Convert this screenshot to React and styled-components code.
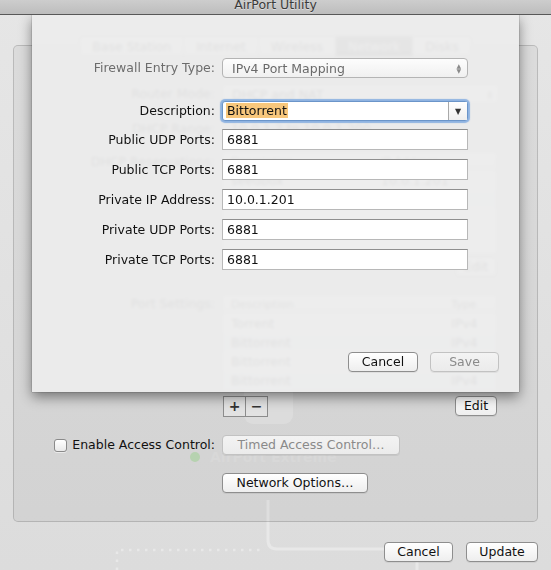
import React from 'react';
import styled, { createGlobalStyle } from 'styled-components';

const GlobalStyle = createGlobalStyle`
  html, body {
    margin: 0;
    padding: 0;
  }
  body {
    width: 551px;
    height: 570px;
    overflow: hidden;
    background: #dedede;
    font-family: "DejaVu Sans", Verdana, sans-serif;
    font-size: 12.5px;
    color: #111;
  }
`;

const Window = styled.div`
  position: relative;
  isolation: isolate;
  width: 551px;
  height: 570px;
  overflow: hidden;
  background: linear-gradient(#e6e6e6, #dcdcdc);
`;

const TitleBar = styled.div`
  position: relative;
  z-index: 3;
  height: 14px;
  display: flex;
  justify-content: center;
  overflow: hidden;
  border-bottom: 1px solid #585858;
  background: linear-gradient(#cdcdcd, #bdbdbd);
`;

const Title = styled.span`
  line-height: 10px;
  color: #3a3a3a;
  text-shadow: 0 1px 0 rgba(255, 255, 255, 0.45);
`;

const Backdrop = styled.svg`
  position: absolute;
  left: 0;
  top: 0;
  z-index: -1;
`;

const Body = styled.div`
  padding: 30px 13px 0;
`;

const Panel = styled.div`
  box-sizing: border-box;
  height: 477px;
  display: flex;
  flex-direction: column;
  padding-right: 40px;
  border: 1px solid rgba(0, 0, 0, 0.15);
  border-radius: 5px;
  background: rgba(0, 0, 0, 0.045);
`;

const Tabs = styled.div`
  align-self: center;
  margin: -10px 0 0 40px;
  display: flex;
  height: 19px;
  border: 1px solid #9c9c9c;
  border-radius: 4px;
  overflow: hidden;
  background: linear-gradient(#ffffff, #ececec);
`;

const Tab = styled.div`
  padding: 0 12px;
  line-height: 19px;
  color: ${p => (p.$active ? '#fff' : '#222')};
  background: ${p => (p.$active ? 'linear-gradient(#7b7b7b, #5e5e5e)' : 'transparent')};
  border-left: ${p => (p.$first ? 'none' : '1px solid #b0b0b0')};
`;

const Row = styled.div`
  display: grid;
  grid-template-columns: ${p => p.$label}px 1fr;
  column-gap: 7px;
  align-items: ${p => p.$align || 'center'};
  margin-top: ${p => p.$top}px;
`;

const Label = styled.div`
  text-align: right;
  line-height: 16px;
  white-space: nowrap;
  color: ${p => (p.$dim ? '#6c6c6c' : '#111')};
  padding-top: ${p => p.$pad || 0}px;
`;

const CheckLabel = styled.label`
  display: flex;
  justify-content: flex-end;
  align-items: center;
  gap: 5px;
  line-height: 16px;
  white-space: nowrap;
`;

const Checkbox = styled.span`
  width: 11px;
  height: 11px;
  border: 1px solid #8a8a8a;
  border-radius: 3px;
  background: linear-gradient(#ffffff, #e9e9e9);
  box-shadow: 0 1px 0 rgba(255, 255, 255, 0.5);
`;

const Value = styled.div`
  line-height: 16px;
  padding-left: 9px;
`;

const PopUp = styled.div`
  box-sizing: border-box;
  width: ${p => p.$width}px;
  height: 20px;
  display: flex;
  align-items: center;
  justify-content: space-between;
  padding: 0 6px 0 9px;
  border: 1px solid #b4b4b4;
  border-radius: 4px;
  background: linear-gradient(#fdfdfd, #f0f0f0);
  color: ${p => (p.$dim ? '#6a6a6a' : '#111')};
`;

const Stepper = styled.span`
  display: flex;
  flex-direction: column;
  font-size: 6px;
  line-height: 5px;
  color: #8a8a8a;
`;

const Combo = styled.div`
  box-sizing: border-box;
  width: 246px;
  height: 20px;
  display: flex;
  background: #fff;
  border: 1px solid #6b95c9;
  border-radius: 3px;
  box-shadow: 0 0 1px 2px rgba(112, 160, 222, 0.75);
`;

const ComboText = styled.div`
  flex: 1;
  padding: 1px 0 0 3px;
`;

const Selected = styled.span`
  display: inline-block;
  padding: 0 1px;
  line-height: 15px;
  background: #f8c77c;
`;

const ComboArrow = styled.div`
  width: 18px;
  display: flex;
  align-items: center;
  justify-content: center;
  border-left: 1px solid #a9a9a9;
  background: linear-gradient(#ffffff, #efefef);
  font-size: 8px;
  color: #333;
`;

const Field = styled.div`
  box-sizing: border-box;
  width: ${p => p.$width || 246}px;
  height: 21px;
  padding-left: 4px;
  line-height: 19px;
  background: #fff;
  border: 1px solid #b8b8b8;
  border-top-color: #8e8e8e;
`;

const Button = styled.div`
  box-sizing: border-box;
  width: ${p => p.$width}px;
  height: 20px;
  line-height: 18px;
  text-align: center;
  white-space: nowrap;
  border: 1px solid ${p => (p.$disabled ? '#c2c2c2' : '#8e8e8e')};
  border-radius: 4px;
  background: ${p => (p.$disabled ? 'linear-gradient(#f3f3f3, #ebebeb)' : 'linear-gradient(#ffffff, #eeeeee)')};
  color: ${p => (p.$disabled ? '#8a8a8a' : '#111')};
  box-shadow: 0 1px 0 rgba(0, 0, 0, 0.06);
`;

const ButtonRow = styled.div`
  display: flex;
  justify-content: ${p => p.$justify || 'flex-end'};
  gap: ${p => p.$gap || 12}px;
  margin-top: ${p => p.$top || 0}px;
`;

const Segmented = styled.div`
  display: flex;
  margin-left: 1px;
  border: 1px solid #8c8c8c;
  background: #e2e2e2;
`;

const Segment = styled.div`
  width: 21px;
  height: 19px;
  line-height: 19px;
  text-align: center;
  font-weight: bold;
  font-size: 14px;
  color: #333;
  border-left: ${p => (p.$first ? 'none' : '1px solid #8c8c8c')};
`;

const ToolRow = styled.div`
  display: flex;
  justify-content: space-between;
  align-items: flex-start;
`;

const Table = styled.div`
  box-sizing: border-box;
  height: ${p => p.$height}px;
  border: 1px solid #bdbdbd;
  background: #fff;
`;

const TableHead = styled.div`
  display: grid;
  grid-template-columns: ${p => p.$cols};
  height: 17px;
  padding-left: 8px;
  line-height: 17px;
  font-size: 11px;
  color: #333;
  border-bottom: 1px solid #c6c6c6;
  background: linear-gradient(#ffffff, #e8e8e8);
`;

const TableRow = styled.div`
  display: grid;
  grid-template-columns: ${p => p.$cols};
  height: 19px;
  padding-left: 8px;
  line-height: 19px;
  background: ${p => (p.$alt ? '#eef2f8' : '#fff')};
`;

const Footer = styled.div`
  display: flex;
  justify-content: flex-end;
  gap: 13px;
  padding: 20px 13px 0;
`;

const Sheet = styled.div`
  position: absolute;
  z-index: 2;
  left: 32px;
  top: 15px;
  box-sizing: border-box;
  width: 487px;
  height: 377px;
  display: flex;
  flex-direction: column;
  padding: 43px 20px 20px 0;
  background: rgba(236, 236, 236, 0.945);
  backdrop-filter: blur(1.5px);
  box-shadow: 0 5px 12px rgba(0, 0, 0, 0.45), 0 0 1px rgba(0, 0, 0, 0.6);
`;

const SheetButtons = styled(ButtonRow)`
  margin-top: auto;
`;

const portRows = [
  ['Torrent', 'IPv4'],
  ['Bittorrent', 'IPv4'],
  ['Bittorrent', 'IPv4'],
  ['Bittorrent', 'IPv4'],
];

const sheetFields = [
  ['Public UDP Ports:', '6881'],
  ['Public TCP Ports:', '6881'],
  ['Private IP Address:', '10.0.1.201'],
  ['Private UDP Ports:', '6881'],
  ['Private TCP Ports:', '6881'],
];

// faded network diagram behind the settings panel
const Diagram = () => (
  <Backdrop width="551" height="570" viewBox="0 0 551 570">
    <rect x="244" y="330" width="49" height="94" rx="9" fill="#e6e6e6" />
    <circle cx="195" cy="457" r="5" fill="#bfdcb8" />
    <text x="210" y="462" fontFamily="DejaVu Sans, sans-serif" fontWeight="bold" fontSize="14" fill="#e2e2e2">
      AirPort Extreme
    </text>
    <path d="M268 500 V540 Q268 549 277 549 H408 Q417 549 417 558 V570" fill="none" stroke="#e8e8e8" strokeWidth="3" />
    <path d="M117 570 V550 H262" fill="none" stroke="#e8e8e8" strokeWidth="2.5" strokeDasharray="2.5 5.5" />
  </Backdrop>
);

const App = () => (
  <Window>
    <GlobalStyle />
    <Diagram />
    <TitleBar>
      <Title>AirPort Utility</Title>
    </TitleBar>

    <Body>
      <Panel>
        <Tabs>
          <Tab $first>Base Station</Tab>
          <Tab>Internet</Tab>
          <Tab>Wireless</Tab>
          <Tab $active>Network</Tab>
          <Tab>Disks</Tab>
        </Tabs>

        <Row $label={201} $top={27}>
          <Label>Router Mode:</Label>
          <PopUp $width={277}>
            DHCP and NAT
            <Stepper><span>▲</span><span>▼</span></Stepper>
          </PopUp>
        </Row>

        <Row $label={201} $top={17}>
          <Label>DHCP Range:</Label>
          <Value>10.0.1.2 to 10.0.1.200</Value>
        </Row>

        <Row $label={201} $top={15} $align="start">
          <Label $pad={2}>DHCP Reservations:</Label>
          <Table $height={102}>
            <TableHead $cols="150px 1fr">
              <span>Description</span>
              <span>IP Address</span>
            </TableHead>
            <TableRow $cols="150px 1fr">
              <span>seedbox</span>
              <span>10.0.1.201</span>
            </TableRow>
            <TableRow $cols="150px 1fr" $alt />
          </Table>
        </Row>

        <ButtonRow $top={3}>
          <Button $width={42}>Edit</Button>
        </ButtonRow>

        <Row $label={201} $top={18} $align="start">
          <Label $pad={1}>Port Settings:</Label>
          <Table $height={95}>
            <TableHead $cols="220px 1fr">
              <span>Description</span>
              <span>Type</span>
            </TableHead>
            {portRows.map(([name, type], i) => (
              <TableRow key={i} $cols="220px 1fr" $alt={i % 2 === 1}>
                <span>{name}</span>
                <span>{type}</span>
              </TableRow>
            ))}
          </Table>
        </Row>

        <Row $label={201} $top={6}>
          <span />
          <ToolRow>
            <Segmented>
              <Segment $first>+</Segment>
              <Segment>−</Segment>
            </Segmented>
            <Button $width={42}>Edit</Button>
          </ToolRow>
        </Row>

        <Row $label={201} $top={18}>
          <CheckLabel>
            <Checkbox />
            Enable Access Control:
          </CheckLabel>
          <ButtonRow $justify="flex-start">
            <Button $width={178} $disabled>Timed Access Control…</Button>
          </ButtonRow>
        </Row>

        <Row $label={201} $top={18}>
          <span />
          <ButtonRow $justify="flex-start">
            <Button $width={146}>Network Options…</Button>
          </ButtonRow>
        </Row>
      </Panel>
    </Body>

    <Footer>
      <Button $width={69}>Cancel</Button>
      <Button $width={72}>Update</Button>
    </Footer>

    <Sheet>
      <Row $label={183} $top={0}>
        <Label $dim>Firewall Entry Type:</Label>
        <PopUp $width={246} $dim>
          IPv4 Port Mapping
          <Stepper><span>▲</span><span>▼</span></Stepper>
        </PopUp>
      </Row>

      <Row $label={183} $top={23}>
        <Label>Description:</Label>
        <Combo>
          <ComboText><Selected>Bittorrent</Selected></ComboText>
          <ComboArrow>▼</ComboArrow>
        </Combo>
      </Row>

      {sheetFields.map(([label, value], i) => (
        <Row key={label} $label={183} $top={i === 0 ? 8 : 9}>
          <Label>{label}</Label>
          <Field>{value}</Field>
        </Row>
      ))}

      <SheetButtons>
        <Button $width={70}>Cancel</Button>
        <Button $width={69} $disabled>Save</Button>
      </SheetButtons>
    </Sheet>
  </Window>
);

export default App;
